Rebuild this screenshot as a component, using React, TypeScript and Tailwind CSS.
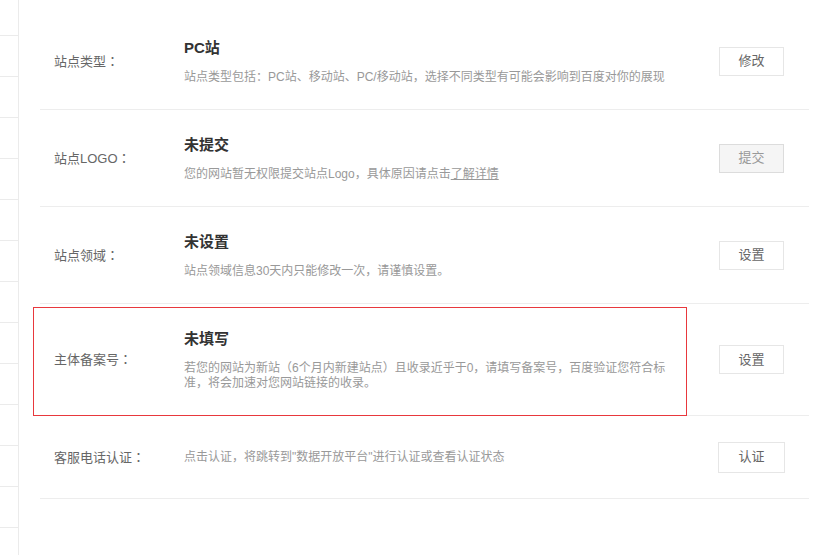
type Row = {
  label: string
  title?: string
  desc: React.ReactNode
  button: string
  disabled?: boolean
  height: string
  highlight?: boolean
}

const rows: Row[] = [
  {
    label: '站点类型',
    title: 'PC站',
    desc: '站点类型包括：PC站、移动站、PC/移动站，选择不同类型有可能会影响到百度对你的展现',
    button: '修改',
    height: 'h-[97px]',
  },
  {
    label: '站点LOGO',
    title: '未提交',
    desc: (
      <>
        您的网站暂无权限提交站点Logo，具体原因请点击<span className="underline cursor-pointer">了解详情</span>
      </>
    ),
    button: '提交',
    disabled: true,
    height: 'h-[97px]',
  },
  {
    label: '站点领域',
    title: '未设置',
    desc: '站点领域信息30天内只能修改一次，请谨慎设置。',
    button: '设置',
    height: 'h-[97px]',
  },
  {
    label: '主体备案号',
    title: '未填写',
    desc: '若您的网站为新站（6个月内新建站点）且收录近乎于0，请填写备案号，百度验证您符合标准，将会加速对您网站链接的收录。',
    button: '设置',
    height: 'h-[112px]',
    highlight: true,
  },
  {
    label: '客服电话认证',
    desc: '点击认证，将跳转到"数据开放平台"进行认证或查看认证状态',
    button: '认证',
    height: 'h-[83px]',
  },
]

export default function App() {
  return (
    <div className="flex h-[555px] w-[833px] overflow-hidden bg-white font-['Liberation_Sans','Noto_Sans_CJK_SC',sans-serif]">
      {/* left nav, mostly cut off */}
      <div className="w-[19px] shrink-0 border-r border-[#ebebeb]">
        <div className="-mt-[5px]">
          {Array.from({ length: 14 }).map((_, i) => (
            <div key={i} className="h-[41px] border-b border-[#ebebeb]" />
          ))}
        </div>
      </div>

      <div className="ml-[21px] w-[769px] pt-[13px]">
        {rows.map((row, i) => (
          <div
            key={i}
            className={`relative flex items-center border-b border-[#ededed] pl-[14px] pr-[25px] ${row.height}`}
          >
            {row.highlight && (
              <div className="pointer-events-none absolute left-[-7px] top-[3px] h-[109px] w-[654px] border border-[#e8383d]" />
            )}
            <div className="w-[130px] shrink-0 text-[13px] text-[#666]">
              {row.label}
              <span className="font-['Noto_Sans_CJK_TC',sans-serif]">：</span>
            </div>
            <div className="w-[490px] shrink-0">
              {row.title && <div className="text-[15px] font-bold leading-[20px] text-[#333]">{row.title}</div>}
              <div className={`text-[12px] leading-[15px] text-[#999] ${row.title ? 'mt-[12px]' : ''}`}>{row.desc}</div>
            </div>
            <div className="ml-auto">
              {row.disabled ? (
                <div className="flex h-[29px] w-[65px] items-center justify-center border border-[#dcdcdc] bg-[#f5f5f5] text-[13px] text-[#999]">
                  {row.button}
                </div>
              ) : i === rows.length - 1 ? (
                <div className="-mr-px flex h-[31px] w-[67px] items-center justify-center border border-[#e6e6e6] bg-white text-[13px] text-[#666]">
                  {row.button}
                </div>
              ) : (
                <div className="flex h-[29px] w-[65px] items-center justify-center border border-[#e6e6e6] bg-white text-[13px] text-[#666]">
                  {row.button}
                </div>
              )}
            </div>
          </div>
        ))}
      </div>
    </div>
  )
}
